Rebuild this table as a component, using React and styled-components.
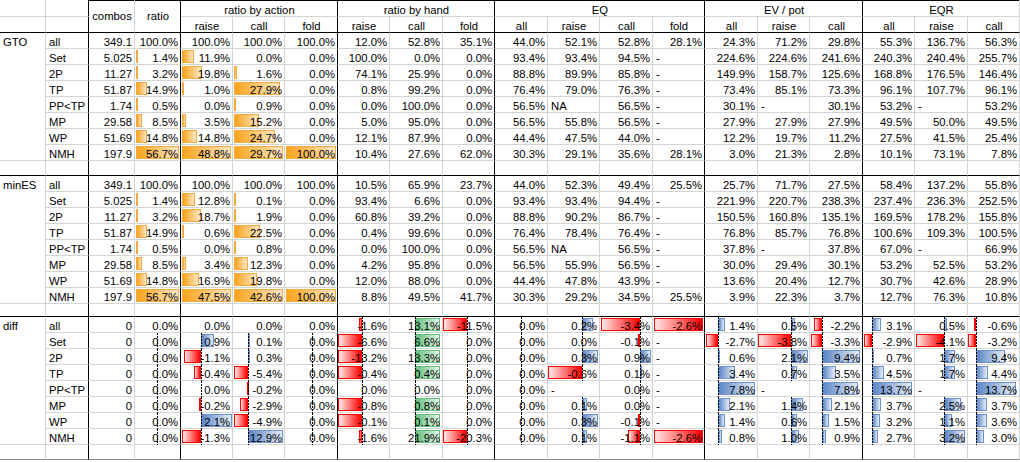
import React from 'react';
import styled, { createGlobalStyle } from 'styled-components';

const GlobalStyle = createGlobalStyle`
  html, body {
    margin: 0;
    padding: 0;
    background: #fff;
  }
  body {
    font-family: "Liberation Sans", Arial, sans-serif;
  }
`;

const GRID = '#d4d4d4';
const COLS = [46, 43, 46, 46, 52, 52, 53, 52, 53, 52, 53, 52, 53, 52, 53, 52, 53, 52, 53, 52];
const THICK = [2, 4, 7, 10, 14, 17];
const LABELS = ['all', 'Set', '2P', 'TP', 'PP<TP', 'MP', 'WP', 'NMH'];
const SUB = ['raise', 'call', 'fold', 'raise', 'call', 'fold', 'all', 'raise', 'call', 'fold', 'all', 'raise', 'call', 'all', 'raise', 'call'];
const GROUPS = [
  ['ratio by action', 5, 3],
  ['ratio by hand', 8, 3],
  ['EQ', 11, 4],
  ['EV / pot', 15, 3],
  ['EQR', 18, 3],
];

const GTO = [
  ['349.1', '100.0%', '100.0%', '100.0%', '100.0%', '12.0%', '52.8%', '35.1%', '44.0%', '52.1%', '52.8%', '28.1%', '24.3%', '71.2%', '29.8%', '55.3%', '136.7%', '56.3%'],
  ['5.025', '1.4%', '11.9%', '0.0%', '0.0%', '100.0%', '0.0%', '0.0%', '93.4%', '93.4%', '94.5%', '-', '224.6%', '224.6%', '241.6%', '240.3%', '240.4%', '255.7%'],
  ['11.27', '3.2%', '19.8%', '1.6%', '0.0%', '74.1%', '25.9%', '0.0%', '88.8%', '89.9%', '85.8%', '-', '149.9%', '158.7%', '125.6%', '168.8%', '176.5%', '146.4%'],
  ['51.87', '14.9%', '1.0%', '27.9%', '0.0%', '0.8%', '99.2%', '0.0%', '76.4%', '79.0%', '76.3%', '-', '73.4%', '85.1%', '73.3%', '96.1%', '107.7%', '96.1%'],
  ['1.74', '0.5%', '0.0%', '0.9%', '0.0%', '0.0%', '100.0%', '0.0%', '56.5%', 'NA', '56.5%', '-', '30.1%', '-', '30.1%', '53.2%', '-', '53.2%'],
  ['29.58', '8.5%', '3.5%', '15.2%', '0.0%', '5.0%', '95.0%', '0.0%', '56.5%', '55.8%', '56.5%', '-', '27.9%', '27.9%', '27.9%', '49.5%', '50.0%', '49.5%'],
  ['51.69', '14.8%', '14.8%', '24.7%', '0.0%', '12.1%', '87.9%', '0.0%', '44.4%', '47.5%', '44.0%', '-', '12.2%', '19.7%', '11.2%', '27.5%', '41.5%', '25.4%'],
  ['197.9', '56.7%', '48.8%', '29.7%', '100.0%', '10.4%', '27.6%', '62.0%', '30.3%', '29.1%', '35.6%', '28.1%', '3.0%', '21.3%', '2.8%', '10.1%', '73.1%', '7.8%'],
];

const MIN_ES = [
  ['349.1', '100.0%', '100.0%', '100.0%', '100.0%', '10.5%', '65.9%', '23.7%', '44.0%', '52.3%', '49.4%', '25.5%', '25.7%', '71.7%', '27.5%', '58.4%', '137.2%', '55.8%'],
  ['5.025', '1.4%', '12.8%', '0.1%', '0.0%', '93.4%', '6.6%', '0.0%', '93.4%', '93.4%', '94.4%', '-', '221.9%', '220.7%', '238.3%', '237.4%', '236.3%', '252.5%'],
  ['11.27', '3.2%', '18.7%', '1.9%', '0.0%', '60.8%', '39.2%', '0.0%', '88.8%', '90.2%', '86.7%', '-', '150.5%', '160.8%', '135.1%', '169.5%', '178.2%', '155.8%'],
  ['51.87', '14.9%', '0.6%', '22.5%', '0.0%', '0.4%', '99.6%', '0.0%', '76.4%', '78.4%', '76.4%', '-', '76.8%', '85.7%', '76.8%', '100.6%', '109.3%', '100.5%'],
  ['1.74', '0.5%', '0.0%', '0.8%', '0.0%', '0.0%', '100.0%', '0.0%', '56.5%', 'NA', '56.5%', '-', '37.8%', '-', '37.8%', '67.0%', '-', '66.9%'],
  ['29.58', '8.5%', '3.4%', '12.3%', '0.0%', '4.2%', '95.8%', '0.0%', '56.5%', '55.9%', '56.5%', '-', '30.0%', '29.4%', '30.1%', '53.2%', '52.5%', '53.2%'],
  ['51.69', '14.8%', '16.9%', '19.8%', '0.0%', '12.0%', '88.0%', '0.0%', '44.4%', '47.8%', '43.9%', '-', '13.6%', '20.4%', '12.7%', '30.7%', '42.6%', '28.9%'],
  ['197.9', '56.7%', '47.5%', '42.6%', '100.0%', '8.8%', '49.5%', '41.7%', '30.3%', '29.2%', '34.5%', '25.5%', '3.9%', '22.3%', '3.7%', '12.7%', '76.3%', '10.8%'],
];

const DIFF = [
  ['0', '0.0%', '0.0%', '0.0%', '0.0%', '-1.6%', '13.1%', '-11.5%', '0.0%', '0.2%', '-3.4%', '-2.6%', '1.4%', '0.5%', '-2.2%', '3.1%', '0.5%', '-0.6%'],
  ['0', '0.0%', '0.9%', '0.1%', '0.0%', '-6.6%', '6.6%', '0.0%', '0.0%', '0.0%', '-0.1%', '-', '-2.7%', '-3.8%', '-3.3%', '-2.9%', '-4.1%', '-3.2%'],
  ['0', '0.0%', '-1.1%', '0.3%', '0.0%', '-13.2%', '13.3%', '0.0%', '0.0%', '0.3%', '0.9%', '-', '0.6%', '2.1%', '9.4%', '0.7%', '1.7%', '9.4%'],
  ['0', '0.0%', '-0.4%', '-5.4%', '0.0%', '-0.4%', '0.4%', '0.0%', '0.0%', '-0.6%', '0.1%', '-', '3.4%', '0.7%', '3.5%', '4.5%', '1.7%', '4.4%'],
  ['0', '0.0%', '0.0%', '-0.2%', '0.0%', '0.0%', '0.0%', '0.0%', '0.0%', '-', '0.0%', '-', '7.8%', '-', '7.8%', '13.7%', '-', '13.7%'],
  ['0', '0.0%', '-0.2%', '-2.9%', '0.0%', '-0.8%', '0.8%', '0.0%', '0.0%', '0.1%', '0.0%', '-', '2.1%', '1.4%', '2.1%', '3.7%', '2.5%', '3.7%'],
  ['0', '0.0%', '2.1%', '-4.9%', '0.0%', '-0.1%', '0.1%', '0.0%', '0.0%', '0.3%', '-0.1%', '-', '1.4%', '0.6%', '1.5%', '3.2%', '1.1%', '3.6%'],
  ['0', '0.0%', '-1.3%', '12.9%', '0.0%', '-1.6%', '21.9%', '-20.3%', '0.0%', '0.1%', '-1.1%', '-2.6%', '0.8%', '1.0%', '0.9%', '2.7%', '3.2%', '3.0%'],
];

// diff data bars, measured from the sheet: axis offset per grid column and
// signed bar length per row (null = no bar and no axis in that cell)
const DIFF_AXIS = { 4: 22, 5: 20, 6: 15, 7: 27, 8: 24, 9: 25, 10: 24, 11: 26, 12: 34, 13: 40, 14: 50, 15: 13, 16: 33, 17: 12, 18: 9, 19: 29, 20: 8 };
const DIFF_BARS = {
  4: [null, 0, 0, 0, 0, 0, 0, 0],
  5: [null, 13, -17, -7, 0, -2, 31, -19],
  6: [null, 1, 2, -14, -1, -8, -14, 35],
  7: [null, 0, 0, 0, 0, 0, 0, 0],
  8: [-3, -24, -24, -24, 0, -24, -24, -3],
  9: [25, 25, 25, 25, 0, 25, 25, 25],
  10: [-24, 0, 0, 0, 0, 0, 0, -24],
  11: [0, 0, 0, 0, 0, 0, 0, 0],
  12: [11, 0, 16, -34, null, 5, 16, 5],
  13: [-39, -2, 11, 2, 0, 0, -2, -12],
  14: [-49, null, null, null, null, null, null, -49],
  15: [7, -12, 2, 17, 37, 12, 7, 4],
  16: [4, -33, 17, 6, null, 12, 6, 8],
  17: [-8, -11, 38, 14, 36, 10, 7, 4],
  18: [9, -8, 2, 12, 40, 9, 8, 6],
  19: [3, -28, 11, 11, null, 17, 8, 21],
  20: [-2, -8, 29, 12, 40, 11, 11, 8],
};

const TONES = {
  orange: { line: '#f5a93a', from: '#f8a31c', to: '#fee7c4' },
  blue: { line: '#6b90cb', from: '#5a86c6', to: '#e6edf8' },
  green: { line: '#63be7b', from: '#63be7b', to: '#e6f5eb' },
  red: { line: '#ff0000', from: '#ff0000', to: '#ffe8e8' },
};

const JUSTIFY = { left: 'flex-start', right: 'flex-end', center: 'center' };

const Sheet = styled.div`
  display: grid;
  grid-template-columns: ${COLS.map((w) => `${w}px`).join(' ')};
  grid-template-rows: 17px 16px repeat(8, 16px) 15px repeat(8, 16px) 13px repeat(8, 16px) 15px;
  width: 1020px;
  font-family: "Liberation Sans", Arial, sans-serif;
  font-size: 11.3px;
  color: #000;
  background: #fff;
  overflow: hidden;
`;

const Cell = styled.div`
  position: relative;
  box-sizing: border-box;
  grid-column: ${(p) => p.$col} / span ${(p) => p.$span || 1};
  grid-row: ${(p) => p.$row} / span ${(p) => p.$rows || 1};
  display: flex;
  align-items: ${(p) => (p.$middle ? 'center' : p.$top ? 'flex-start' : 'flex-end')};
  justify-content: ${(p) => JUSTIFY[p.$align || 'left']};
  padding: ${(p) => (p.$top ? '3px' : '0')} 2px 0 3px;
  border-right: 1px solid ${(p) => (p.$thick ? '#000' : GRID)};
  border-bottom: 1px solid ${(p) => p.$bottom || GRID};
  box-shadow: ${(p) => (p.$topLine ? `inset 0 1px 0 ${p.$topLine}` : 'none')};
  line-height: 12px;
  white-space: nowrap;
`;

const Val = styled.span`
  position: relative;
  z-index: 1;
`;

const Bar = styled.div`
  position: absolute;
  top: 1px;
  height: 13px;
  box-sizing: border-box;
  border: 1px solid ${(p) => TONES[p.$tone].line};
  background: linear-gradient(
    ${(p) => (p.$flip ? 'to left' : 'to right')},
    ${(p) => TONES[p.$tone].from},
    ${(p) => TONES[p.$tone].to}
  );
`;

const Axis = styled.div`
  position: absolute;
  top: 0;
  bottom: -1px;
  width: 1px;
  z-index: 2;
  background: repeating-linear-gradient(to bottom, #000 0 2px, transparent 2px 3px);
`;

const isThick = (col) => THICK.includes(col);
const isText = (v) => v === '-' || v === 'NA';

function orangeWidths(rows) {
  // data bars for ratio / raise / call / fold, scaled to the column max
  const out = {};
  for (let c = 1; c <= 4; c++) {
    const vals = rows.slice(1).map((r) => parseFloat(r[c]));
    const max = Math.max(...vals);
    const room = COLS[c + 2] - 3;
    out[c + 3] = [null, ...vals.map((v) => (v > 0 ? Math.max(1, Math.round((v / max) * room)) : 0))];
  }
  return out;
}

function DataBar({ col, len, axis }) {
  if (!len) return null;
  const neg = len < 0;
  const tone = neg ? 'red' : col === 9 ? 'green' : 'blue';
  const width = Math.abs(len);
  const left = neg ? axis - width : axis;
  return <Bar $tone={tone} $flip={neg} style={{ left, width }} />;
}

function Section({ name, rows, start, kind, sepBottom }) {
  const cells = [];
  const bars = kind === 'orange' ? orangeWidths(rows) : null;

  cells.push(
    <Cell key={`${name}-a`} $col={1} $row={start} $rows={8} $top>
      {name}
    </Cell>
  );

  rows.forEach((vals, i) => {
    const row = start + i;
    cells.push(
      <Cell key={`${name}-${i}-b`} $col={2} $row={row} $thick>
        {LABELS[i]}
      </Cell>
    );
    vals.forEach((v, j) => {
      const col = j + 3;
      let extra = null;
      if (bars && bars[col] && bars[col][i]) {
        extra = <Bar $tone="orange" style={{ left: 1, width: bars[col][i] }} />;
      }
      if (kind === 'diff' && DIFF_BARS[col] && DIFF_BARS[col][i] !== null) {
        const axis = DIFF_AXIS[col];
        const len = DIFF_BARS[col][i];
        extra = (
          <>
            <DataBar col={col} len={len} axis={axis} />
            {axis < COLS[col - 1] - 3 && <Axis style={{ left: axis }} />}
          </>
        );
      }
      cells.push(
        <Cell key={`${name}-${i}-${col}`} $col={col} $row={row} $thick={isThick(col)} $align={isText(v) ? 'left' : 'right'}>
          {extra}
          <Val>{v}</Val>
        </Cell>
      );
    });
  });

  for (let col = 1; col <= 20; col++) {
    cells.push(
      <Cell key={`${name}-sep-${col}`} $col={col} $row={start + 8} $thick={isThick(col)} $bottom={sepBottom} />
    );
  }
  return cells;
}

export default function App() {
  return (
    <>
      <GlobalStyle />
      <Sheet>
        <Cell $col={1} $row={1} />
        <Cell $col={2} $row={1} $thick />
        <Cell $col={1} $row={2} $bottom="#000" />
        <Cell $col={2} $row={2} $thick $bottom="#000" />
        <Cell $col={3} $row={1} $rows={2} $middle $align="center" $bottom="#000" $topLine="#000">
          combos
        </Cell>
        <Cell $col={4} $row={1} $rows={2} $middle $align="center" $thick $bottom="#000" $topLine="#000">
          ratio
        </Cell>
        {GROUPS.map(([label, col, span]) => (
          <Cell key={label} $col={col} $row={1} $span={span} $align="center" $thick={isThick(col + span - 1)} $topLine="#000">
            {label}
          </Cell>
        ))}
        {SUB.map((label, i) => (
          <Cell key={`sub-${i}`} $col={i + 5} $row={2} $align="center" $thick={isThick(i + 5)} $bottom="#000">
            {label}
          </Cell>
        ))}
        {Section({ name: 'GTO', rows: GTO, start: 3, kind: 'orange', sepBottom: '#000' })}
        {Section({ name: 'minES', rows: MIN_ES, start: 12, kind: 'orange', sepBottom: '#000' })}
        {Section({ name: 'diff', rows: DIFF, start: 21, kind: 'diff', sepBottom: '#8a8a8a' })}
      </Sheet>
    </>
  );
}
